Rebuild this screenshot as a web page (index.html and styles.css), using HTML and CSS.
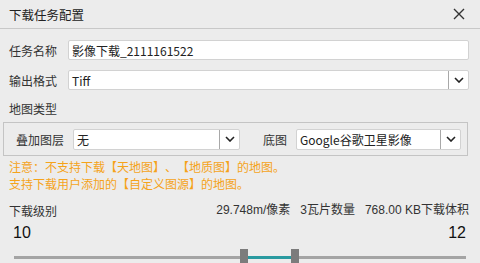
FILE: index.html
```html
<!DOCTYPE html>
<html lang="zh-CN">
  <head>
    <meta charset="UTF-8" />
    <title>下载任务配置</title>
    <link rel="stylesheet" href="styles.css">
  </head>
  <body>
    <div class="dialog">
      <div class="titlebar">
        <span class="title">下载任务配置</span>
        <svg class="close" width="12" height="12" viewBox="0 0 12 12">
          <path d="M1 1L11 11M11 1L1 11" stroke="#333" stroke-width="1.4" fill="none" />
        </svg>
      </div>
      <div class="content">
        <div class="row">
          <label class="label">任务名称</label>
          <div class="field text">影像下载_2111161522</div>
        </div>
        <div class="row">
          <label class="label">输出格式</label>
          <div class="field select">
            <span class="value">Tiff</span>
            <span class="arrow"><svg width="10" height="6" viewBox="0 0 10 6"><path d="M1 1L5 5L9 1" stroke="#222" stroke-width="1.6" fill="none" /></svg></span>
          </div>
        </div>
        <div class="section-title">地图类型</div>
        <div class="group">
          <label class="label">叠加图层</label>
          <div class="field select overlay">
            <span class="value">无</span>
            <span class="arrow"><svg width="10" height="6" viewBox="0 0 10 6"><path d="M1 1L5 5L9 1" stroke="#222" stroke-width="1.6" fill="none" /></svg></span>
          </div>
          <label class="label base-label">底图</label>
          <div class="field select base">
            <span class="value">Google谷歌卫星影像</span>
            <span class="arrow"><svg width="10" height="6" viewBox="0 0 10 6"><path d="M1 1L5 5L9 1" stroke="#222" stroke-width="1.6" fill="none" /></svg></span>
          </div>
        </div>
        <div class="notes">
          <div>注意：不支持下载【天地图】、【地质图】的地图。</div>
          <div>支持下载用户添加的【自定义图源】的地图。</div>
        </div>
        <div class="level-row">
          <span>下载级别</span>
          <span class="stats">29.748m/像素&nbsp;&nbsp;&nbsp;3瓦片数量&nbsp;&nbsp;&nbsp;768.00 KB下载体积</span>
        </div>
        <div class="range-values">
          <span>10</span>
          <span>12</span>
        </div>
        <div class="slider">
          <div class="track"></div>
          <div class="fill" style="left: 230px; width: 52px;"></div>
          <div class="handle" style="left: 226px;"></div>
          <div class="handle" style="left: 277px;"></div>
        </div>
      </div>
    </div>
  </body>
</html>
```

FILE: styles.css
```css
body {
  margin: 0;
  background-color: #ececec;
  font-family: "Noto Sans CJK SC", "Noto Sans", sans-serif;
  font-size: 12px;
  color: #333;
  overflow: hidden;
  text-spacing-trim: space-all;
}
.dialog {
  width: 480px;
  height: 263px;
}
.titlebar {
  height: 28px;
  display: flex;
  align-items: center;
  justify-content: space-between;
  padding: 0 15px 0 9px;
  border-bottom: 1px solid #c8c8c8;
}
.title {
  font-size: 12.5px;
  color: #222;
}
.content {
  padding: 11px 11px 0 9px;
}
.row {
  display: flex;
  align-items: center;
  margin-bottom: 10px;
}
.label {
  width: 59px;
  flex-shrink: 0;
  color: #333;
}
.field {
  flex: 1;
  height: 18px;
  background: #fff;
  border: 1px solid #d2d2d2;
  border-radius: 2px;
  display: flex;
  align-items: center;
  font-size: 12px;
  color: #222;
}
.text {
  padding-left: 3px;
}
.select .value {
  flex: 1;
  padding-left: 3px;
}
.select .arrow {
  width: 19px;
  height: 100%;
  border-left: 1px solid #a8a8a8;
  display: flex;
  align-items: center;
  justify-content: center;
}
.section-title {
  margin: 9px 0 5px;
  line-height: 17px;
}
.group {
  margin-left: -6px;
  width: 465px;
  height: 34px;
  border: 1px solid #c4c4c4;
  display: flex;
  align-items: center;
  padding-left: 12px;
  padding-right: 6px;
  box-sizing: border-box;
}
.group .label {
  width: 57px;
}
.group .field {
  height: 19px;
}
.overlay {
  flex: none;
  width: 165px;
}
.base-label.label {
  width: auto;
  margin-left: 23px;
  margin-right: 9px;
}
.base {
  flex: 1;
}
.notes {
  color: #f5a31a;
  line-height: 17px;
  margin-top: 2px;
}
.level-row {
  display: flex;
  justify-content: space-between;
  margin-top: 10px;
  line-height: 17px;
}
.stats {
  font-family: "Liberation Sans", "Noto Sans CJK SC", sans-serif;
  color: #333;
}
.range-values {
  display: flex;
  justify-content: space-between;
  font-family: "Liberation Sans", sans-serif;
  font-size: 16px;
  color: #111;
  padding: 0 3px 0 4px;
  line-height: 20px;
  margin-top: 4px;
}
.slider {
  position: relative;
  height: 20px;
  margin: 0 3px 0 5px;
}
.track {
  position: absolute;
  left: 0;
  right: 0;
  top: 13px;
  height: 3px;
  background: #a4a4a4;
}
.fill {
  position: absolute;
  top: 13px;
  height: 3px;
  background: #2a9aa0;
}
.handle {
  position: absolute;
  top: 6px;
  width: 8px;
  height: 16px;
  background: #7c7c7c;
}
```
